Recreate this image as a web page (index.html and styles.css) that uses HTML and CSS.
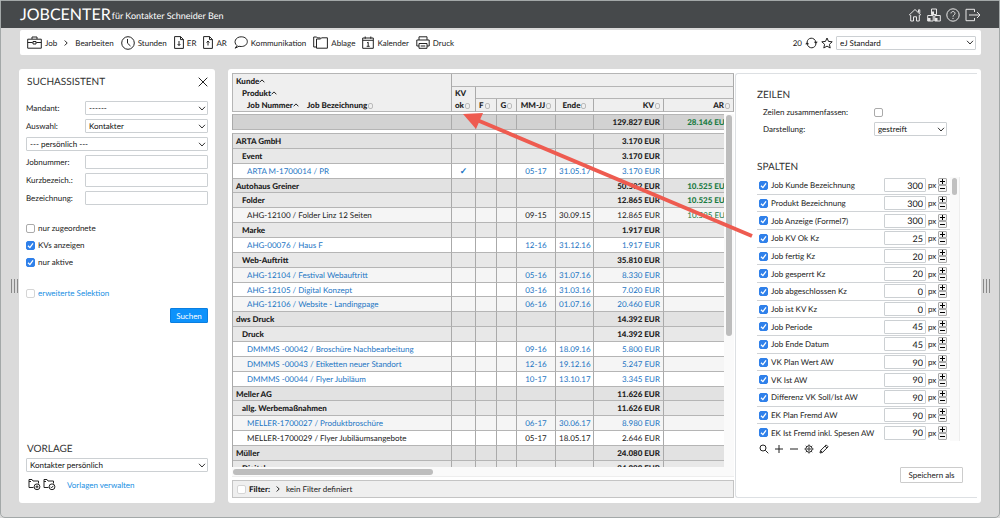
FILE: index.html
```html
<!DOCTYPE html>
<html lang="de">
<head>
    <meta charset="utf-8">
    <title>Jobcenter</title>
    <link rel="stylesheet" href="styles.css">
</head>
<body>
    <header class="topbar">
        <h1>JOBCENTER</h1>
        <span class="subtitle">für Kontakter Schneider Ben</span>
        <nav class="top-icons">
            <a href="#" aria-label="Home"><svg viewBox="0 0 14 14" width="14" height="14"><path d="M1 7.2 7 1.5l6 5.7M10.5 4V1.8h1.3v3.6M2.7 7v6h2.8V8.8h3V13h2.8V7"/></svg></a>
            <a href="#" aria-label="Module"><svg viewBox="0 0 14 14" width="14" height="14"><path d="M4.5 1h5v5.500h-5zM.7 7.500h5.500V13H.7zM7.800 7.500h5.500V13H7.800z"/><path class="solid" d="M4.500 3.500h2.500v3H4.500zM.7 10h2.800v3H.7zM7.800 10h2.700v3H7.800z"/></svg></a>
            <a href="#" aria-label="Hilfe"><svg viewBox="0 0 14 14" width="14" height="14"><circle cx="7" cy="7" r="6.2"/><path d="M5 5.400c.1-2.500 4-2.400 4 0C9 6.900 7 6.900 7 8.700M7 9.900v1.100"/></svg></a>
            <a href="#" aria-label="Abmelden"><svg viewBox="0 0 16 14" width="16" height="14"><path d="M9.500 4V1.300H1v11.400h8.500V10M4 7h11M12 4l3 3-3 3"/></svg></a>
        </nav>
    </header>

    <div class="toolbar">
        <button class="tool"><svg viewBox="0 0 15 13" width="15" height="13"><path d="M.7 3.200h13.600v9H.7zM5 3V1h5v2M.7 6.500h5M9.300 6.500h5M6 5.500h3v2.500H6z"/></svg>Job</button>
        <svg class="crumb" viewBox="0 0 4 6" width="4" height="6"><path d="M.7.500 3.200 3 .7 5.500"/></svg>
        <button class="tool">Bearbeiten</button>
        <button class="tool"><svg viewBox="0 0 14 14" width="14" height="14"><circle cx="7" cy="7" r="6.300"/><path d="M6.500 3v4.200l3 2.800"/></svg>Stunden</button>
        <button class="tool doc"><svg viewBox="0 0 10 13" width="10" height="13"><path d="M.6.600h6L9.400 3.500v8.900H.6zM6.500.600v3h3M5 5v4.500M3.600 8 5 9.500 6.400 8"/></svg>ER</button>
        <button class="tool doc"><svg viewBox="0 0 10 13" width="10" height="13"><path d="M.6.600h6L9.400 3.500v8.900H.6zM6.500.600v3h3M5 9.500V5M3.600 6.500 5 5l1.400 1.500"/></svg>AR</button>
        <button class="tool"><svg viewBox="0 0 14 13" width="14" height="13"><path d="M3 9.600C-1 6.500 1.500.800 7.200.800c8.300 0 8 9.700 0 9.700-1 0-1.500-.1-2.200-.3L1.200 12.200z"/></svg>Kommunikation</button>
        <button class="tool"><svg viewBox="0 0 15 13" width="15" height="13"><path d="M3.500 3h4l1-1.200h5.900v10.400H3.500zM3.500 11H.7V1h3l.8.900h3"/></svg>Ablage</button>
        <button class="tool"><svg viewBox="0 0 12 13" width="12" height="13"><path d="M.7 2h10.600v10.300H.7zM.7 4.300h10.600M3.200.500v2.300M8.800.500v2.300M5 7l1.200-.8v4M4.700 10.300h3"/></svg>Kalender</button>
        <button class="tool"><svg viewBox="0 0 14 13" width="14" height="13"><path d="M3 4V.800h8V4M3 10H.8V4h12.400v6H11M3 7.500h8v4.800H3zM4.700 10h4.600"/></svg>Druck</button>
        <div class="view">
            <span>20</span>
            <button class="icon-btn" aria-label="Aktualisieren"><svg viewBox="0 0 13 12" width="13" height="12"><path d="M2 5.500C2.500 0 9.500-.3 10.900 5M11 6.500C10.500 12 3.500 12.300 2.100 7"/><path class="fill" d="M8.800 4.700h4L10.800 7zM.2 7.200h4L2.200 5z"/></svg></button>
            <button class="icon-btn" aria-label="Favorit"><svg viewBox="0 0 12 12" width="12" height="12"><path d="M6 1l1.500 3.400 3.700.4-2.800 2.500.8 3.700L6 9.100 2.800 11l.8-3.700L.8 4.800l3.700-.4z"/></svg></button>
            <select class="view-select" aria-label="Ansicht"><option>eJ Standard</option></select>
        </div>
    </div>

    <main class="workspace">
        <div class="grip"><i></i><i></i><i></i></div>

        <aside class="sidebar">
            <div class="side-head">
                <h2>SUCHASSISTENT</h2>
                <button class="icon-btn" aria-label="Schließen"><svg viewBox="0 0 10 10" width="10" height="10"><path d="M.7.700l8.600 8.600M9.300.700.7 9.300"/></svg></button>
            </div>
            <form class="search-form">
                <label for="mandant">Mandant:</label>
                <select id="mandant"><option>------</option></select>
                <label for="auswahl">Auswahl:</label>
                <select id="auswahl"><option>Kontakter</option></select>
                <select class="wide" aria-label="Suchvorlage"><option>--- persönlich ---</option></select>
                <label for="jobnummer">Jobnummer:</label>
                <input type="text" id="jobnummer">
                <label for="kurz">Kurzbezeich.:</label>
                <input type="text" id="kurz">
                <label for="bezeichnung">Bezeichnung:</label>
                <input type="text" id="bezeichnung">
            </form>
            <div class="checks">
                <label><input type="checkbox">nur zugeordnete</label>
                <label><input type="checkbox" checked>KVs anzeigen</label>
                <label><input type="checkbox" checked>nur aktive</label>
            </div>
            <label class="extended"><input type="checkbox">erweiterte Selektion</label>
            <button class="search-btn">Suchen</button>

            <div class="vorlage">
                <h2>VORLAGE</h2>
                <select aria-label="Vorlage"><option>Kontakter persönlich</option></select>
                <div class="vorlage-links">
                    <button class="icon-btn" aria-label="Vorlage hinzufügen"><svg viewBox="0 0 13 13" width="13" height="13"><path d="M5.500 9.500H1V1.500h3l1 1.500h5.500v2.500M1 3.500h2"/><circle cx="9" cy="8.800" r="2.900"/><path d="M9 7.300v3M7.500 8.800h3"/></svg></button>
                    <button class="icon-btn" aria-label="Vorlage speichern"><svg viewBox="0 0 13 13" width="13" height="13"><path d="M5.500 9.500H1V1.500h3l1 1.500h5.500v2.500M1 3.500h2"/><circle cx="9" cy="8.800" r="2.900"/><path d="M7.600 8.800l1 1 1.800-2"/></svg></button>
                    <a href="#">Vorlagen verwalten</a>
                </div>
            </div>
        </aside>

        <section class="content">
            <div class="list">
                <table class="head">
                    <colgroup><col><col class="c-ok"><col class="c-f"><col class="c-g"><col class="c-mm"><col class="c-ende"><col class="c-eur"><col class="c-eur"></colgroup>
                    <tr>
                        <th rowspan="3" class="names">
                            <div>Kunde<svg class="asc" viewBox="0 0 6 4"><path d="M.6 3.300 3 .900l2.400 2.400"/></svg></div>
                            <div class="lvl1">Produkt<svg class="asc" viewBox="0 0 6 4"><path d="M.6 3.300 3 .900l2.400 2.400"/></svg></div>
                            <div class="lvl2"><span class="jobnr">Job Nummer<svg class="asc" viewBox="0 0 6 4"><path d="M.6 3.300 3 .900l2.400 2.400"/></svg></span>Job Bezeichnung<i class="sort"></i></div>
                        </th>
                        <th colspan="7"></th>
                    </tr>
                    <tr class="mid-row">
                        <th rowspan="2" class="kvok"><div>KV</div><div>ok<i class="sort"></i></div></th>
                        <th colspan="6"></th>
                    </tr>
                    <tr>
                        <th>F<i class="sort"></i></th>
                        <th>G<i class="sort"></i></th>
                        <th>MM-JJ<i class="sort"></i></th>
                        <th>Ende<i class="sort"></i></th>
                        <th class="num">KV<i class="sort"></i></th>
                        <th class="num">AR<i class="sort"></i></th>
                    </tr>
                </table>
                <div class="scroller">
                    <div class="clip">
                        <table class="total">
                            <colgroup><col><col class="c-ok"><col class="c-f"><col class="c-g"><col class="c-mm"><col class="c-ende"><col class="c-eur"><col class="c-eur"></colgroup>
                            <tr><td></td><td></td><td></td><td></td><td></td><td></td><td class="num">129.827 EUR</td><td class="num ar">28.146 EUR</td></tr>
                        </table>
                        <table class="jobs">
                            <colgroup><col><col class="c-ok"><col class="c-f"><col class="c-g"><col class="c-mm"><col class="c-ende"><col class="c-eur"><col class="c-eur"></colgroup>
                            <tbody id="rows"></tbody>
                        </table>
                    </div>
                    <div class="vtrack"><div class="vthumb"></div></div>
                </div>
                <div class="htrack"><div class="hthumb"></div></div>
                <div class="filter">
                    <input type="checkbox" id="filter"><label for="filter">Filter:</label>
                    <svg viewBox="0 0 4 6" width="4" height="6"><path d="M.7.500 3.200 3 .7 5.500"/></svg>
                    <span>kein Filter definiert</span>
                </div>
            </div>

            <div class="config">
                <h2>ZEILEN</h2>
                <div class="options">
                    <label for="zusammen">Zeilen zusammenfassen:</label>
                    <input type="checkbox" id="zusammen">
                    <label for="darstellung">Darstellung:</label>
                    <select id="darstellung"><option>gestreift</option></select>
                </div>
                <h2>SPALTEN</h2>
                <div class="columns">
                    <div class="column-list" id="columns"></div>
                    <div class="ctrack"><div class="cthumb"></div></div>
                </div>
                <div class="config-tools">
                    <button class="icon-btn" aria-label="Suchen"><svg viewBox="0 0 10 10" width="10" height="10"><circle cx="4" cy="4" r="3"/><path d="M6.300 6.300l3 3"/></svg></button>
                    <button class="icon-btn" aria-label="Hinzufügen"><svg viewBox="0 0 10 10" width="10" height="10"><path d="M5 1v8M1 5h8"/></svg></button>
                    <button class="icon-btn" aria-label="Entfernen"><svg viewBox="0 0 10 10" width="10" height="10"><path d="M1 5h8"/></svg></button>
                    <button class="icon-btn" aria-label="Einstellungen"><svg viewBox="0 0 10 10" width="10" height="10"><circle cx="5" cy="5" r="3.200"/><circle cx="5" cy="5" r="1.200"/><path d="M5 .5v1.300M5 8.200v1.300M.5 5h1.300M8.200 5h1.300M1.800 1.800l.9.900M7.300 7.300l.9.900M8.200 1.800l-.9.900M2.700 7.300l-.9.900"/></svg></button>
                    <button class="icon-btn" aria-label="Bearbeiten"><svg viewBox="0 0 10 10" width="10" height="10"><path d="M1 9l.6-2.500L7.200.900 9.100 2.800 3.500 8.400zM6 2.100 7.900 4M1.600 6.500l1.900 1.900"/></svg></button>
                </div>
                <button class="save-btn">Speichern als</button>
            </div>

            <svg class="arrow" viewBox="0 0 292 130" width="292" height="130"><path class="shaft" d="M14 7 289 123"/><path class="tip" d="M0 1 20 0 13 16z"/></svg>
        </section>

        <div class="grip"><i></i><i></i><i></i></div>
    </main>

    <script>
        // level, name, month, end, kv, ar, open (blue), ok
        const rows = [
            [0, "ARTA GmbH", "", "", "3.170"],
            [1, "Event", "", "", "3.170"],
            [2, "ARTA M-1700014 / PR", "05-17", "31.05.17", "3.170", "", 1, 1],
            [0, "Autohaus Greiner", "", "", "50.592", "10.525"],
            [1, "Folder", "", "", "12.865", "10.525"],
            [2, "AHG-12100 / Folder Linz 12 Seiten", "09-15", "30.09.15", "12.865", "10.525", 0],
            [1, "Marke", "", "", "1.917"],
            [2, "AHG-00076 / Haus F", "12-16", "31.12.16", "1.917", "", 1],
            [1, "Web-Auftritt", "", "", "35.810"],
            [2, "AHG-12104 / Festival Webauftritt", "05-16", "31.07.16", "8.330", "", 1],
            [2, "AHG-12105 / Digital Konzept", "03-16", "31.03.16", "7.020", "", 1],
            [2, "AHG-12106 / Website - Landingpage", "06-16", "01.07.16", "20.460", "", 1],
            [0, "dws Druck", "", "", "14.392"],
            [1, "Druck", "", "", "14.392"],
            [2, "DMMMS -00042 / Broschüre Nachbearbeitung", "09-16", "18.09.16", "5.800", "", 1],
            [2, "DMMMS -00043 / Etiketten neuer Standort", "12-16", "19.12.16", "5.247", "", 1],
            [2, "DMMMS -00044 / Flyer Jubiläum", "10-17", "13.10.17", "3.345", "", 1],
            [0, "Meller AG", "", "", "11.626"],
            [1, "allg. Werbemaßnahmen", "", "", "11.626"],
            [2, "MELLER-1700027 / Produktbroschüre", "06-17", "30.06.17", "8.980", "", 1],
            [2, "MELLER-1700029 / Flyer Jubiläumsangebote", "05-17", "18.05.17", "2.646", "", 0],
            [0, "Müller", "", "", "24.080"],
            [1, "Digital", "", "", "24.080"]
        ];
        const kinds = ["kunde", "produkt", "job"];
        let jobCount = 0;
        let html = "";
        for (const [level, name, month, end, kv, ar, open, ok] of rows) {
            let cls = kinds[level];
            if (level === 2) {
                if (open) cls += " open";
                if (jobCount++ % 2) cls += " striped";
            }
            html += `<tr class="${cls}"><td>${name}</td><td class="mid check">${ok ? "✓" : ""}</td><td></td><td></td>` +
                `<td class="mid">${month}</td><td class="mid">${end}</td><td class="num">${kv} EUR</td>` +
                `<td class="num ar">${ar ? ar + " EUR" : ""}</td></tr>`;
        }
        document.getElementById("rows").innerHTML = html;

        const columns = [
            ["Job Kunde Bezeichnung", 300], ["Produkt Bezeichnung", 300], ["Job Anzeige (Formel7)", 300],
            ["Job KV Ok Kz", 25], ["Job fertig Kz", 20], ["Job gesperrt Kz", 20],
            ["Job abgeschlossen Kz", 0], ["Job ist KV Kz", 0], ["Job Periode", 45],
            ["Job Ende Datum", 45], ["VK Plan Wert AW", 90], ["VK Ist AW", 90],
            ["Differenz VK Soll/Ist AW", 90], ["EK Plan Fremd AW", 90], ["EK Ist Fremd inkl. Spesen AW", 90]
        ];
        document.getElementById("columns").innerHTML = columns.map(([name, width], i) =>
            `<div class="column"><input type="checkbox" id="col${i}" checked><label for="col${i}">${name}</label>` +
            `<input type="text" value="${width}" aria-label="Breite ${name}"><span>px</span>` +
            `<div class="stepper"><button aria-label="mehr"><svg viewBox="0 0 5 5"><path d="M2.500 0v5M0 2.500h5"/></svg></button>` +
            `<button aria-label="weniger"><svg viewBox="0 0 5 5"><path d="M0 2.500h5"/></svg></button></div></div>`
        ).join("");
    </script>
</body>
</html>
```
FILE: styles.css
```css
* {
    box-sizing: border-box;
}

body {
    margin: 0;
    height: 100vh;
    display: flex;
    flex-direction: column;
    background-color: #dadada;
    border: 1px solid #a3a8a8;
    border-radius: 0 0 5px 5px;
    overflow: hidden;
    font-family: Lato, sans-serif;
    font-size: 8px;
    line-height: 12px;
    text-rendering: geometricPrecision;
    color: #222;
}

h1, h2 {
    margin: 0;
    font-weight: 400;
}

h2 {
    font-size: 10px;
    line-height: 14px;
    color: #333;
}

svg {
    display: block;
    fill: none;
    stroke: currentColor;
    stroke-width: 1;
    flex: none;
}

a {
    color: #1a8fe3;
    text-decoration: none;
}

button, input, select {
    font: inherit;
    text-rendering: inherit;
    color: inherit;
    margin: 0;
    padding: 0;
    border-radius: 1px;
}

button {
    cursor: pointer;
}

select, input[type="text"] {
    height: 14px;
    min-width: 0;
    border: 1px solid #ccd0d3;
    background-color: #fff;
    color: #111;
}

select {
    appearance: none;
    width: 100%;
    padding: 0 12px 0 3px;
    line-height: 12px;
    background: #fff url("data:image/svg+xml,%3Csvg xmlns='http://www.w3.org/2000/svg' viewBox='0 0 8 5'%3E%3Cpath d='M1 .8 4 4 7 .8' fill='none' stroke='%23333'/%3E%3C/svg%3E") no-repeat right 1px center / 8px 5px;
}

input[type="checkbox"] {
    appearance: none;
    flex: none;
    width: 9px;
    height: 9px;
    border: 1px solid #aaa;
    border-radius: 2px;
    background-color: #fff;
}

input[type="checkbox"]:checked {
    border-color: #2f80ea;
    background: #2f80ea url("data:image/svg+xml,%3Csvg xmlns='http://www.w3.org/2000/svg' viewBox='0 0 9 9'%3E%3Cpath d='M2 4.700 3.900 6.600 7 2.300' fill='none' stroke='%23fff' stroke-width='1.300'/%3E%3C/svg%3E") center / 9px 9px;
}

.icon-btn {
    border: none;
    background: none;
}

/* header */
.topbar {
    flex: none;
    height: 27px;
    display: flex;
    align-items: center;
    padding: 0 18px 0 19px;
    background-color: #46494b;
    color: #fff;
}

.topbar h1 {
    font-size: 16px;
    line-height: 20px;
}

.subtitle {
    margin-left: 1px;
    font-size: 9px;
    padding-top: 2px;
}

.top-icons {
    display: flex;
    gap: 5px;
    margin-left: auto;
}

.top-icons a {
    color: #e8e8e8;
}

.solid, .fill {
    fill: currentColor;
    stroke: none;
}

.toolbar {
    flex: none;
    display: flex;
    align-items: center;
    gap: 7px;
    height: 25px;
    margin: 2px 18px 14px 19px;
    padding: 0 5px 0 7px;
    background-color: #fff;
    border-radius: 2px;
}

.tool {
    display: flex;
    align-items: center;
    gap: 3px;
    border: none;
    background: none;
}

.view {
    display: flex;
    align-items: center;
    gap: 3px;
    margin-left: auto;
}

.view-select {
    width: 140px;
}

/* main area */
.workspace {
    flex: 1;
    min-height: 0;
    display: flex;
    margin-bottom: 14px;
}

.grip {
    width: 18px;
    flex: none;
    display: flex;
    align-items: center;
    justify-content: flex-end;
    gap: 2px;
    padding-right: 1px;
}

.grip i {
    width: 1px;
    height: 14px;
    background-color: #888;
}

.grip:last-child {
    justify-content: flex-start;
    padding-left: 2px;
}

.sidebar {
    flex: none;
    width: 196px;
    margin-right: 13px;
    padding: 6px 7px 12px;
    display: flex;
    flex-direction: column;
    background-color: #fff;
    border-radius: 3px;
}

.side-head {
    display: flex;
    justify-content: space-between;
    align-items: center;
    padding-left: 1px;
    margin-bottom: 12px;
}

.search-form {
    display: grid;
    grid-template-columns: 59px 1fr;
    gap: 4px 0;
    align-items: center;
}

.search-form .wide {
    grid-column: span 2;
}

.checks {
    display: flex;
    flex-direction: column;
    gap: 5px;
    margin-top: 17px;
}

.checks label, .extended {
    display: flex;
    align-items: center;
    gap: 3px;
}

.extended {
    margin-top: 19px;
    color: #1a8fe3;
}

.extended input, .filter input[type="checkbox"] {
    border-color: #d5d5d5;
}

.search-btn {
    align-self: flex-end;
    width: 38px;
    height: 15px;
    margin-top: 9px;
    border: 1px solid #0a7ee0;
    background-color: #0d92fb;
    color: #fff;
}

.vorlage {
    margin-top: auto;
}

.vorlage h2 {
    padding-left: 1px;
    margin-bottom: 2px;
}

.vorlage-links {
    display: flex;
    align-items: center;
    gap: 2px;
    margin-top: 6px;
    padding-left: 2px;
}

.vorlage-links a {
    margin-left: 9px;
}

.content {
    position: relative;
    flex: 1;
    min-width: 0;
    display: flex;
    padding: 4px 4px 5px;
    background-color: #fff;
    border-radius: 3px;
}

.list {
    flex: 1;
    min-width: 0;
    display: flex;
    flex-direction: column;
}

/* tables */
table {
    width: 100%;
    table-layout: fixed;
    border-collapse: separate;
    border-spacing: 0;
    color: #222;
}

th, td {
    padding: 0 3px;
    border-right: 1px solid #aaa;
    border-bottom: 1px solid #b5b5b5;
    white-space: nowrap;
    overflow: hidden;
}

th:first-child, td:first-child {
    text-align: left;
}

.c-ok { width: 24px; }
.c-f { width: 21px; }
.c-g { width: 20px; }
.c-mm { width: 39px; }
.c-ende { width: 38px; }
.c-eur { width: 70px; }

.num {
    text-align: right;
}

.mid {
    text-align: center;
}

.check {
    font-size: 9px;
    font-weight: 700;
}

.head {
    flex: none;
    border-top: 1px solid #b5b5b5;
    border-left: 1px solid #b5b5b5;
    background-color: #efefef;
}

.head th {
    height: 13px;
    line-height: 11px;
    font-weight: 900;
}

.head .mid-row th {
    height: 12px;
}

.head .names, .head .kvok {
    line-height: 12px;
    text-align: left;
}

.lvl1 {
    padding-left: 6px;
}

.lvl2 {
    padding-left: 11px;
}

.jobnr {
    display: inline-block;
    width: 60px;
}

.asc {
    display: inline-block;
    width: 6px;
    height: 4px;
    margin-bottom: 1px;
}

.sort {
    display: inline-block;
    width: 5px;
    height: 6px;
    margin-left: 1px;
    vertical-align: -1px;
    border: 1px solid #bbb;
    border-radius: 2px;
}

.scroller {
    flex: 1;
    min-height: 0;
    display: flex;
    margin-top: 2px;
}

.clip {
    flex: 1;
    min-width: 0;
    overflow: hidden;
}

.clip table {
    width: calc(100% + 10px);
    border-left: 1px solid #aaa;
    border-top: 1px solid #b5b5b5;
}

.total {
    margin-bottom: 3px;
    background-color: #d2d2d2;
    font-weight: 900;
}

.total td {
    height: 15px;
}

.jobs {
    height: 343px;
}

.jobs td {
    line-height: 12px;
}

.kunde, .produkt {
    font-weight: 900;
    background-color: #e2e2e2;
}

.produkt {
    background-color: #e8e8e8;
}

.produkt td:first-child {
    padding-left: 9px;
}

.job td:first-child {
    padding-left: 14px;
}

.striped {
    background-color: #f5f5f5;
}

.open {
    color: #1d75c4;
}

.total .ar, .jobs .ar {
    color: #1b7b43;
}

.vtrack {
    width: 10px;
    padding: 1px 2px;
    background-color: #fafafa;
}

.vthumb {
    width: 6px;
    height: 63%;
    border-radius: 3px;
    background-color: #bdbdbd;
}

.htrack {
    flex: none;
    height: 10px;
    padding: 2px 1px;
    margin-bottom: 3px;
    border-bottom: 1px solid #eee;
    background-color: #fafafa;
}

.hthumb {
    width: 40%;
    height: 6px;
    border-radius: 3px;
    background-color: #bdbdbd;
}

.filter {
    flex: none;
    display: flex;
    align-items: center;
    gap: 3px;
    height: 18px;
    padding: 0 4px;
    border: 1px solid #c4c4c4;
    background-color: #efefef;
}

.filter label {
    font-weight: 900;
    color: #222;
}

.filter svg {
    margin: 0 3px;
}

/* column settings */
.config {
    flex: none;
    width: 242px;
    margin-left: 1px;
    padding: 14px 14px 14px 21px;
    display: flex;
    flex-direction: column;
    border: 1px solid #dde0e3;
    border-right: none;
    border-radius: 3px 0 0 3px;
}

.options {
    display: grid;
    grid-template-columns: 111px 73px;
    gap: 4px 0;
    align-items: center;
    margin: 4px 0 24px 6px;
}

.columns {
    flex: 1;
    min-height: 0;
    display: flex;
    margin: 3px 3px 0 0;
}

.column-list {
    flex: 1;
    min-width: 0;
    display: flex;
    flex-direction: column;
}

.column {
    flex: 1;
    min-height: 0;
    display: flex;
    align-items: center;
    padding: 0 3px 0 2px;
    border-bottom: 1px solid #d0d3d6;
}

.column:last-child {
    border-bottom: none;
}

.column label {
    flex: 1;
    padding-left: 3px;
    white-space: nowrap;
}

.column input[type="text"] {
    width: 42px;
    padding-right: 2px;
    font-size: 9px;
    text-align: right;
}

.column span {
    width: 12px;
    padding-left: 2px;
}

.stepper {
    display: flex;
    flex-direction: column;
}

.stepper button {
    display: flex;
    align-items: center;
    justify-content: center;
    width: 9px;
    height: 7px;
    border: 1px solid #aaa;
    background-color: #f6f6f6;
    color: #000;
}

.stepper svg {
    width: 5px;
    height: 5px;
}

.ctrack {
    flex: none;
    width: 10px;
    padding: 1px 2px;
    border-right: 1px solid #eee;
    background-color: #fafafa;
}

.cthumb {
    width: 5px;
    height: 17px;
    border-radius: 3px;
    background-color: #c0c0c0;
}

.config-tools {
    display: flex;
    gap: 5px;
    margin: 3px 0 13px 2px;
}

.save-btn {
    align-self: flex-end;
    width: 63px;
    height: 16px;
    border: 1px solid #ccc;
    background-color: #fff;
    color: #222;
}

/* pointer from column setting to column header */
.arrow {
    position: absolute;
    left: 235px;
    top: 44px;
    pointer-events: none;
}

.shaft {
    stroke: #ee5b50;
    stroke-width: 4;
}

.tip {
    fill: #ee5b50;
    stroke: none;
}
```
